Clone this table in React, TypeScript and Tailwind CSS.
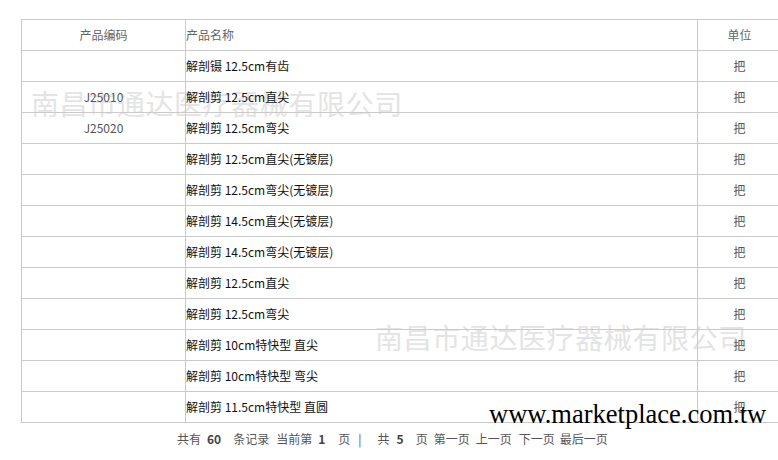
import React from "react";

const rows = [
  { code: "", name: "解剖镊 12.5cm有齿", unit: "把" },
  { code: "J25010", name: "解剖剪 12.5cm直尖", unit: "把" },
  { code: "J25020", name: "解剖剪 12.5cm弯尖", unit: "把" },
  { code: "", name: "解剖剪 12.5cm直尖(无镀层)", unit: "把" },
  { code: "", name: "解剖剪 12.5cm弯尖(无镀层)", unit: "把" },
  { code: "", name: "解剖剪 14.5cm直尖(无镀层)", unit: "把" },
  { code: "", name: "解剖剪 14.5cm弯尖(无镀层)", unit: "把" },
  { code: "", name: "解剖剪 12.5cm直尖", unit: "把" },
  { code: "", name: "解剖剪 12.5cm弯尖", unit: "把" },
  { code: "", name: "解剖剪 10cm特快型 直尖", unit: "把" },
  { code: "", name: "解剖剪 10cm特快型 弯尖", unit: "把" },
  { code: "", name: "解剖剪 11.5cm特快型 直圆", unit: "把" },
];

const cjk = "font-['Noto_Sans_CJK_SC','Liberation_Sans',sans-serif]";

const App: React.FC = () => {
  return (
    <div className={`relative w-[778px] h-[460px] overflow-hidden bg-white ${cjk} text-[12px]`}>
      {/* faint company watermarks, behind the table */}
      <div className="absolute left-[31px] top-[87px] z-0 text-[28px] leading-[32px] text-[#e4e4e4] tracking-[0.6px] whitespace-nowrap">
        南昌市通达医疗器械有限公司
      </div>
      <div className="absolute left-[375px] top-[321px] z-0 text-[28px] leading-[32px] text-[#e4e4e4] tracking-[0.6px] whitespace-nowrap">
        南昌市通达医疗器械有限公司
      </div>

      <div className="relative z-10 pt-[19px] pl-[21px]">
        <table className="w-[760px] border-collapse table-fixed">
          <colgroup>
            <col className="w-[164px]" />
            <col className="w-[512px]" />
            <col className="w-[84px]" />
          </colgroup>
          <thead>
            <tr className="h-[31px]">
              <th className="border border-[#cacaca] font-normal text-[#666] text-center leading-none">
                产品编码
              </th>
              <th className="border border-[#cacaca] font-normal text-[#666] text-left leading-none">
                产品名称
              </th>
              <th className="border border-[#cacaca] font-normal text-[#666] text-center leading-none">
                单位
              </th>
            </tr>
          </thead>
          <tbody>
            {rows.map((r, i) => (
              <tr key={i} className="h-[31px]">
                <td className="border border-[#cacaca] text-center text-[#555] leading-none">
                  {r.code}
                </td>
                <td className="border border-[#cacaca] text-left text-[#111] leading-none">
                  {r.name}
                </td>
                <td className="border border-[#cacaca] text-center text-[#555] leading-none">
                  {r.unit}
                </td>
              </tr>
            ))}
          </tbody>
        </table>

        {/* pager */}
        <div className="flex items-center pl-[156px] pt-[8px] leading-[16px] text-[#555] whitespace-nowrap">
          <span>共有</span>
          <b className="ml-[6px] text-[#444]">60</b>
          <span className="ml-[12px]">条记录</span>
          <span className="ml-[7px]">当前第</span>
          <b className="ml-[6px] text-[#444]">1</b>
          <span className="ml-[13px]">页</span>
          <span className="ml-[8px]">|</span>
          <span className="ml-[16px]">共</span>
          <b className="ml-[7px] text-[#444]">5</b>
          <span className="ml-[12px]">页</span>
          <span className="ml-[6px]">第一页</span>
          <span className="ml-[6px]">上一页</span>
          <span className="ml-[7px]">下一页</span>
          <span className="ml-[5px]">最后一页</span>
        </div>
      </div>

      <div className="absolute left-[489px] top-[399px] z-20 font-['Liberation_Serif',serif] text-[26.5px] leading-[30px] text-black whitespace-nowrap">
        www.marketplace.com.tw
      </div>
    </div>
  );
};

export default App;
